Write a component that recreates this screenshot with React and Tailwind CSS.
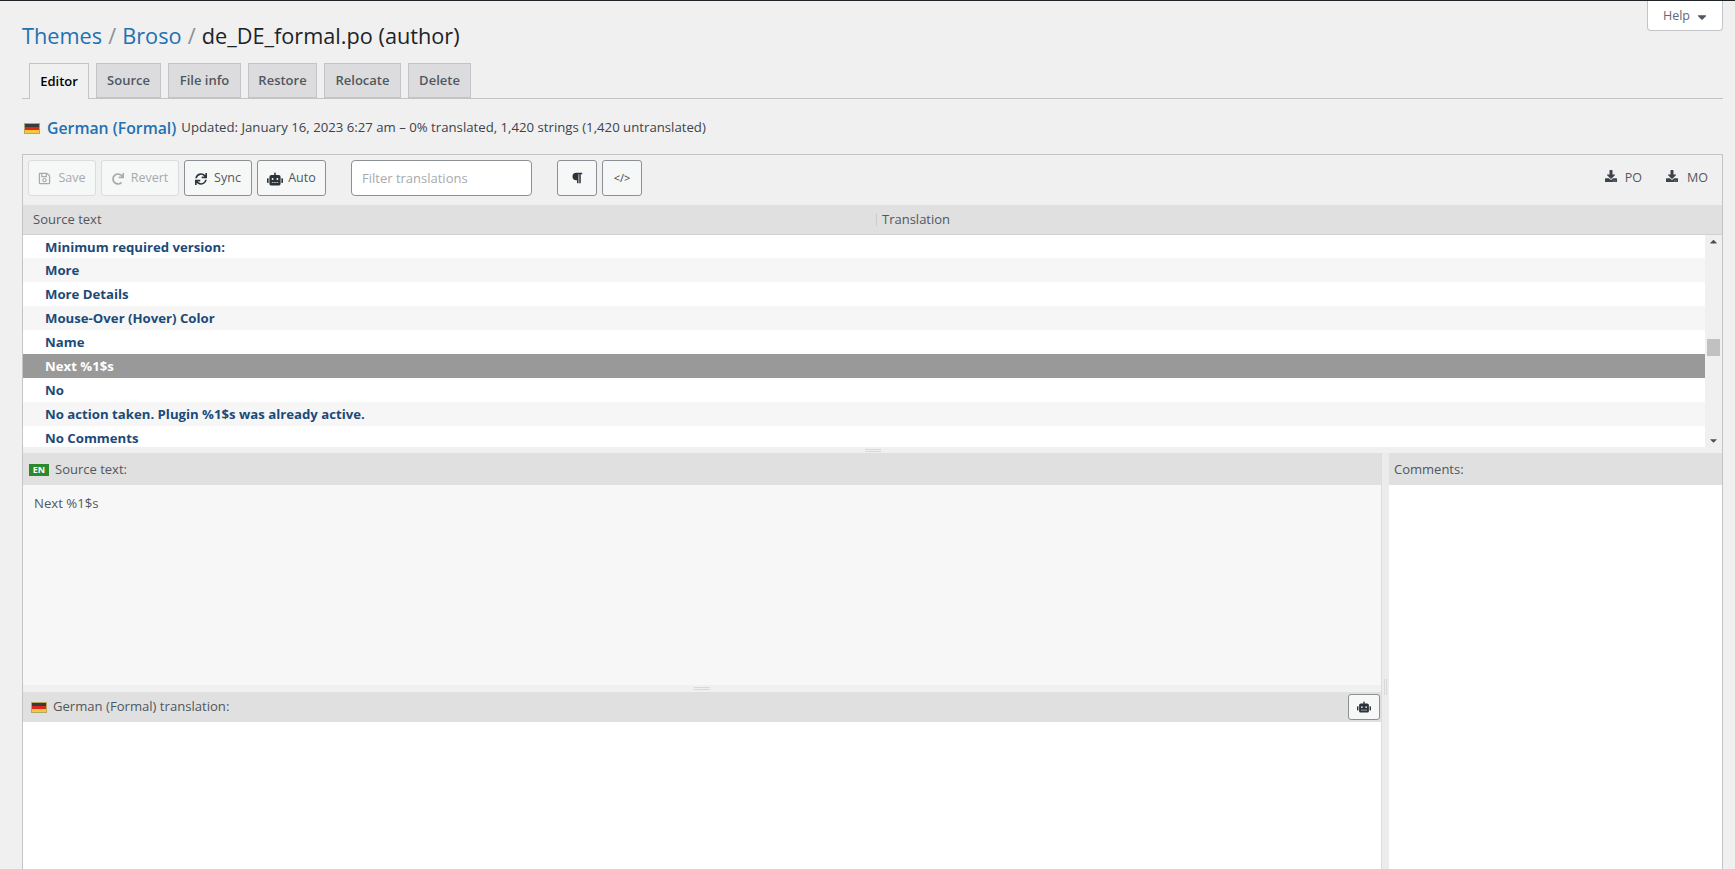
import { FaRobot, FaDownload, FaSync, FaRegSave, FaRedo, FaCaretDown, FaCaretUp, FaParagraph } from "react-icons/fa";

const rows = [
  "Minimum required version:",
  "More",
  "More Details",
  "Mouse-Over (Hover) Color",
  "Name",
  "Next %1$s",
  "No",
  "No action taken. Plugin %1$s was already active.",
  "No Comments",
];

const tabs = [
  { name: "Source", w: "w-[65px]" },
  { name: "File info", w: "w-[73px]" },
  { name: "Restore", w: "w-[69px]" },
  { name: "Relocate", w: "w-[77px]" },
  { name: "Delete", w: "w-[63px]" },
];

function Flag() {
  return (
    <span className="flex flex-col w-4 h-[11px] border border-[#b5a66a] shrink-0">
      <span className="flex-1 bg-[#3a3a3a]" />
      <span className="flex-1 bg-[#dd2a1e]" />
      <span className="flex-1 bg-[#f5c93a]" />
    </span>
  );
}

function ToolButton({ icon, label, disabled, width }) {
  return (
    <button
      className={
        "h-9 pt-[1px] flex items-center justify-center gap-[7px] rounded-[3px] border bg-[#f6f7f7] text-[12.5px] " +
        width +
        " " +
        (disabled ? "border-[#dcdcde] text-[#a7aaad]" : "border-[#8c8f94] text-[#50575e]")
      }
    >
      {icon}
      {label}
    </button>
  );
}

function App() {
  return (
    <div className="relative h-[869px] overflow-hidden bg-[#f0f0f1] border-t border-[#1d2327] pl-[22px] pr-3 font-['Open_Sans',sans-serif] text-[#3c434a]">
      <button className="absolute top-0 right-[12px] w-[76px] h-[30px] pt-[2px] pl-[2px] flex items-center justify-center gap-[5px] bg-white border border-t-0 border-[#c3c4c7] rounded-b-[4px] text-[12.5px] text-[#646970]">
        Help
        <FaCaretDown className="text-[14px] text-[#50575e]" />
      </button>

      <h1 className="h-[62px] pt-[19px] text-[21.7px] leading-[32px] text-[#1d2327] whitespace-nowrap">
        <a className="text-[#2271b1]">Themes</a>
        <span className="text-[#8c8f94] mx-[0.5px]"> / </span>
        <a className="text-[#2271b1]">Broso</a>
        <span className="text-[#8c8f94] mx-[0.5px]"> / </span>
        de_DE_formal.po (author)
      </h1>

      <nav className="flex gap-[7px] h-[36px] pl-[7px] border-b border-[#c3c4c7]">
        <span className="h-9 w-[60px] flex items-center justify-center border border-b-0 border-[#c3c4c7] bg-[#f0f0f1] text-[13px] font-semibold text-[#000000]">
          Editor
        </span>
        {tabs.map((t) => (
          <span
            key={t.name}
            className={
              "h-[35px] pt-[1px] flex items-center justify-center border border-[#c3c4c7] bg-[#dcdcde] text-[13px] font-semibold text-[#50575e] " +
              t.w
            }
          >
            {t.name}
          </span>
        ))}
      </nav>

      <div className="h-[55px] pt-[4px] flex items-center gap-[5px] pl-[2px]">
        <Flag />
        <a className="ml-[2px] text-[15.8px] font-semibold text-[#2271b1]">German (Formal)</a>
        <span className="-mt-[1px] text-[13.2px] text-[#3c434a]">
          Updated: January 16, 2023 6:27 am – 0% translated, 1,420 strings (1,420 untranslated)
        </span>
      </div>

      <div className="border border-[#c3c4c7]">
        <div className="h-[50px] flex items-start pt-[5px] pl-[5px]">
          <div className="flex gap-[5px]">
            <ToolButton disabled width="w-[68px]" label="Save" icon={<FaRegSave className="text-[13px]" />} />
            <ToolButton disabled width="w-[78px]" label="Revert" icon={<FaRedo className="text-[12px]" />} />
            <ToolButton width="w-[68px]" label="Sync" icon={<FaSync className="text-[12px] text-[#2c3338]" />} />
            <ToolButton width="w-[69px]" label="Auto" icon={<FaRobot className="text-[16px] text-[#2c3338] -mr-[2px]" />} />
          </div>
          <input
            placeholder="Filter translations"
            className="ml-[25px] w-[181px] h-9 px-[10px] rounded-[4px] border border-[#8c8f94] bg-white text-[13px] placeholder:text-[#a7aaad] outline-none"
          />
          <button className="ml-[25px] w-10 h-9 flex items-center justify-center rounded-[3px] border border-[#8c8f94] bg-[#f6f7f7] text-[#2c3338]">
            <FaParagraph className="text-[12px]" />
          </button>
          <button className="ml-[5px] w-10 h-9 rounded-[3px] border border-[#8c8f94] bg-[#f6f7f7] text-[11px] text-[#3c434a]">
            &lt;/&gt;
          </button>
          <div className="ml-auto h-9 flex items-center gap-[24px] pr-[14px] text-[12.5px] text-[#50575e]">
            <span className="flex items-center gap-[8px]">
              <FaDownload className="text-[12px] text-[#3c434a] -mt-1" />
              PO
            </span>
            <span className="flex items-center gap-[9px]">
              <FaDownload className="text-[12px] text-[#3c434a] -mt-1" />
              MO
            </span>
          </div>
        </div>

        <div className="h-[30px] flex items-center bg-[#e0e0e0] border-b border-[#d2d2d2] text-[13px] text-[#50575e]">
          <div className="w-[853px] pl-[10px]">Source text</div>
          <div className="border-l border-[#cccccc] pl-[5px] leading-[13px]">Translation</div>
        </div>

        <div className="flex h-[212px] bg-white overflow-hidden">
          <div className="flex-1">
            {rows.map((r, i) => (
              <div
                key={r}
                className={
                  "pl-[22px] pt-[2px] flex items-center text-[13.2px] font-bold " +
                  (i === 0 ? "h-[23px] " : "h-6 ") +
                  (r === "Next %1$s"
                    ? "bg-[#999999] text-white"
                    : i % 2
                    ? "bg-[#f6f6f6] text-[#1c4a78]"
                    : "bg-white text-[#1c4a78]")
                }
              >
                {r}
              </div>
            ))}
          </div>
          <div className="w-[17px] bg-[#f0f0f0] flex flex-col items-center pt-[1px] pb-[1px] text-[#505050]">
            <FaCaretUp className="text-[11px]" />
            <div className="w-[13px] h-[17px] bg-[#c1c1c1] mt-[92px]" />
            <FaCaretDown className="text-[11px] mt-auto" />
          </div>
        </div>

        <div className="h-[6px] bg-[#f0f0f0] flex items-center justify-center">
          <div className="w-4 h-[3px] border-y border-[#d8d8d8] ml-[1px]" />
        </div>

        <div className="flex h-[420px]">
          <div className="w-[1359px] flex flex-col border-r border-[#dcdcdc]">
            <div className="h-[32px] pt-[1px] flex items-center gap-[6px] pl-[6px] bg-[#e0e0e0] text-[13px] text-[#50575e]">
              <span className="w-5 h-3 bg-[#2a8a2d] text-white text-[9px] font-bold leading-[12px] text-center">EN</span>
              Source text:
            </div>
            <div className="h-[200px] bg-[#f7f7f7] px-[11px] py-[8px] text-[13.2px] leading-[20px] text-[#50575e]">
              Next %1$s
            </div>
            <div className="h-[7px] bg-[#f0f0f0] flex items-center justify-center">
              <div className="w-4 h-[3px] border-y border-[#d8d8d8]" />
            </div>
            <div className="h-[30px] flex items-center gap-[6px] pl-[8px] pr-[1px] bg-[#e0e0e0] text-[13.1px] text-[#50575e]">
              <Flag />
              German (Formal) translation:
              <button className="ml-auto -mt-[1px] w-[32px] h-[26px] flex items-center justify-center rounded-[3px] border border-[#8c8f94] bg-[#f6f7f7]">
                <FaRobot className="text-[14px] text-[#2c3338]" />
              </button>
            </div>
            <div className="flex-1 bg-white" />
          </div>
          <div className="w-[7px] bg-[#ececec] flex justify-center pt-[226px]">
            <div className="w-[3px] h-4 border-x border-[#d8d8d8]" />
          </div>
          <div className="flex-1 flex flex-col">
            <div className="h-[32px] pt-[1px] flex items-center pl-[5px] bg-[#e0e0e0] text-[13px] text-[#50575e]">Comments:</div>
            <div className="flex-1 bg-white" />
          </div>
        </div>
      </div>
    </div>
  );
}

export default App;
